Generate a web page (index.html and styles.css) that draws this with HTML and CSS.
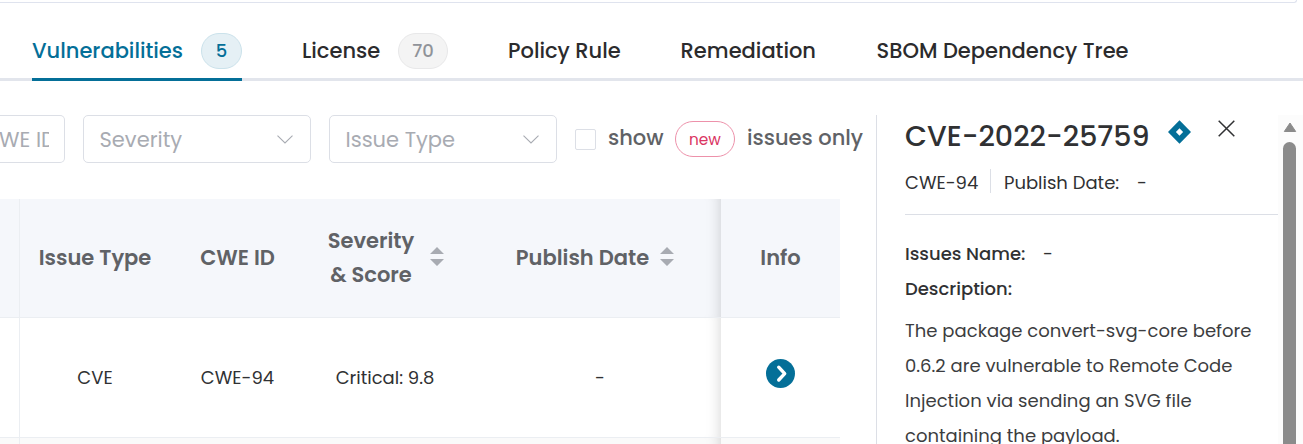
FILE: index.html
```html
<!DOCTYPE html>
<html lang="en">
<head>
<meta charset="utf-8">
<title>Vulnerabilities</title>
<link rel="stylesheet" href="styles.css">
</head>
<body>
<div class="card-edge"></div>
<nav class="tabs">
  <a class="tab active">Vulnerabilities<span class="badge">5</span></a>
  <a class="tab license">License<span class="badge muted">70</span></a>
  <a class="tab policy">Policy Rule</a>
  <a class="tab remediation">Remediation</a>
  <a class="tab">SBOM Dependency Tree</a>
</nav>
<div class="content">
  <main class="main">
    <div class="filters">
      <div class="input"><span>WE ID</span></div>
      <div class="select">Severity
        <svg width="16" height="9" viewBox="0 0 16 9"><path d="M.5.7 8 8 15.5.7" fill="none" stroke="#a8abb2" stroke-width="1.1"/></svg>
      </div>
      <div class="select">Issue Type
        <svg width="16" height="9" viewBox="0 0 16 9"><path d="M.5.7 8 8 15.5.7" fill="none" stroke="#a8abb2" stroke-width="1.1"/></svg>
      </div>
      <label class="toggle"><i class="box"></i><span class="show">show</span><span class="pill">new</span>issues only</label>
    </div>
    <div class="table">
      <div class="row head">
        <div class="cell lead"></div>
        <div class="cell">Issue Type</div>
        <div class="cell">CWE ID</div>
        <div class="cell severity"><span class="two">Severity<br>&amp; Score</span>
          <svg class="sort" width="14" height="19" viewBox="0 0 14 19"><path d="M0 7 7 0l7 7zM0 12h14l-7 7z" fill="#a8abb2"/></svg></div>
        <div class="cell pub">Publish Date
          <svg class="sort tight" width="14" height="19" viewBox="0 0 14 19"><path d="M0 7 7 0l7 7zM0 12h14l-7 7z" fill="#a8abb2"/></svg></div>
        <div class="cell">Info</div>
      </div>
      <div class="row">
        <div class="cell lead"></div>
        <div class="cell">CVE</div>
        <div class="cell">CWE-94</div>
        <div class="cell">Critical: 9.8</div>
        <div class="cell pub">-</div>
        <div class="cell"><svg class="go" width="29" height="29" viewBox="0 0 29 29"><circle cx="14.5" cy="14.5" r="14.5" fill="#046f98"/><path d="m12.700 8.200 6 6.400-6 6.400" fill="none" stroke="#fff" stroke-width="3.400" stroke-linecap="round" stroke-linejoin="round"/></svg></div>
      </div>
      <div class="row next">
        <div class="cell lead"></div><div class="cell"></div><div class="cell"></div><div class="cell"></div><div class="cell pub"></div><div class="cell"></div>
      </div>
    </div>
  </main>
  <aside class="detail">
    <div class="body">
      <div class="title">
        <h2>CVE-2022-25759</h2>
        <svg class="gem" width="23" height="24" viewBox="0 0 23 24"><path fill-rule="evenodd" d="M11.500.3 23 12 11.500 23.700 0 12zM11.500 8.300 7.900 12l3.600 3.700 3.600-3.700z" fill="#046f98"/></svg>
        <svg class="close" width="17" height="17" viewBox="0 0 17 17"><path d="m.7.7 15.600 15.600M16.300.7.7 16.300" stroke="#303133" stroke-width="1.500"/></svg>
      </div>
      <div class="meta"><span class="id">CWE-94</span><span class="date">Publish Date:</span><span>-</span></div>
      <div class="field"><b>Issues Name:</b><span>-</span></div>
      <div class="field"><b>Description:</b></div>
      <p class="text">The package convert-svg-core before<br>0.6.2 are vulnerable to Remote Code<br>Injection via sending an SVG file<br>containing the payload.</p>
    </div>
    <div class="scroll">
      <svg width="14" height="10" viewBox="0 0 14 10"><path d="M1.300 9.500h11.400L7 1z" fill="#8b8b8b" stroke="#8b8b8b" stroke-linejoin="round"/></svg>
      <div class="thumb"></div>
    </div>
  </aside>
</div>
</body>
</html>
```
FILE: styles.css
```css
* { box-sizing: border-box; }
body {
  margin: 0;
  height: 444px;
  overflow: hidden;
  display: flex;
  flex-direction: column;
  background: #fff;
  color: #303133;
  font-family: Poppins, Inter, sans-serif;
  white-space: nowrap;
}
svg { display: block; flex: none; }

.card-edge {
  flex: none;
  height: 3px;
  width: 1297px;
  border-bottom: 1px solid #dfe3ee;
  border-right: 1px solid #dfe3ee;
  border-bottom-right-radius: 8px;
}

/* Tabs */
.tabs {
  flex: none;
  display: flex;
  gap: 60px;
  height: 78px;
  padding-left: 32px;
  border-bottom: 3px solid #e2e5ec;
}
.tab {
  display: flex;
  align-items: flex-start;
  justify-content: space-between;
  height: 78px;
  padding-top: 30px;
  border-bottom: 3px solid transparent;
  line-height: 35px;
  font-size: 21px;
  font-weight: 500;
  color: #2b2b2d;
}
.tab.active { width: 210px; color: #046f98; border-bottom-color: #046f98; }
.tab.license { width: 146px; }
.tab.policy { width: 112.6px; }
.tab.remediation { width: 136px; }
.badge {
  width: 41px;
  height: 36px;
  border: 1px solid #cbe2eb;
  border-radius: 18px;
  background: #e5f0f5;
  color: #046f98;
  font-size: 18px;
  line-height: 34px;
  text-align: center;
}
.badge.muted {
  width: 50px;
  border-color: #e8e8e9;
  background: #f4f4f4;
  color: #909399;
}

.content { flex: 1; display: flex; min-height: 0; overflow: hidden; }
.main { width: 876px; flex: none; padding-top: 34px; }

/* Filters */
.filters { display: flex; gap: 18px; height: 48px; font-size: 21px; color: #a8abb2; }
.input, .select {
  display: flex;
  align-items: center;
  justify-content: space-between;
  height: 48px;
  border: 1px solid #dcdfe6;
  border-radius: 5px;
}
.input { width: 65px; border-left: 0; border-radius: 0 5px 5px 0; }
.input span { width: 49px; overflow: hidden; text-indent: -1px; }
.select { width: 228px; padding: 0 17px 0 15.5px; }
.toggle { display: flex; align-items: flex-start; color: #606266; font-weight: 500; line-height: 45px; }
.box { width: 21px; height: 21px; margin-top: 14px; border: 1px solid #dcdfe6; border-radius: 2px; }
.show { width: 67px; margin-left: 12px; }
.pill {
  width: 60px;
  height: 36px;
  margin: 6px 12px 0 0;
  border: 1px solid #ed91aa;
  border-radius: 18px;
  color: #da3562;
  font-size: 15.3px;
  font-weight: 400;
  line-height: 35px;
  text-align: center;
}

/* Table */
.table { width: 840px; margin-top: 36px; }
.row {
  display: grid;
  grid-template-columns: 20px 150px 135px 160px 256px 119px;
  height: 120px;
  border-bottom: 1px solid #ebeef2;
  font-size: 18px;
}
.row.head { height: 119px; background: #f5f7fb; color: #606266; font-size: 21px; font-weight: 600; }
.row.next { background: #fafafa; border: 0; }
.cell { display: flex; align-items: center; justify-content: center; }
.head .cell { padding-bottom: 2px; }
.head .severity { padding: 0 0 0 2px; }
.lead { border-right: 1px solid #ebeef2; }
.pub {
  padding-left: 14px;
  box-shadow: inset -15px 0 15px -15px rgba(0, 0, 0, .18);
}
.head .pub { padding-left: 4px; }
.two { text-align: center; line-height: 34px; }
.sort { margin: -2px 0 0 16px; }
.severity .sort { margin-top: -4px; }
.sort.tight { margin-left: 11px; }
.go { margin-top: -8px; }

/* Detail panel */
.detail { flex: 1; display: flex; margin-top: 34px; border-left: 1px solid #dcdfe6; }
.body { width: 401px; padding-left: 28px; font-size: 18px; }
.title { display: flex; height: 50px; }
h2 { margin: 0; width: 263px; font-size: 28.5px; font-weight: 500; line-height: 42px; }
.gem { margin-top: 5px; }
.close { margin: 5px 0 0 27px; }
.meta { display: flex; height: 50px; padding-top: 4px; border-bottom: 1px solid #dcdfe6; line-height: 27px; }
.id { width: 86px; height: 24px; border-right: 1px solid #dcdfe6; }
.date { margin-left: 13px; width: 133px; }
.field { display: flex; height: 35px; line-height: 35px; }
.meta + .field { margin-top: 21px; }
.field b { width: 138px; font-weight: 500; }
.text { margin: 7px 0 0; line-height: 35px; letter-spacing: .02px; color: #3c3d40; }
.scroll { flex: 1; display: flex; flex-direction: column; padding: 7px 0 0 5px; background: #fcfcfc; }
.thumb { flex: 1; width: 13px; margin-top: 10px; border-radius: 7px 7px 0 0; background: #8b8b8b; }
```
